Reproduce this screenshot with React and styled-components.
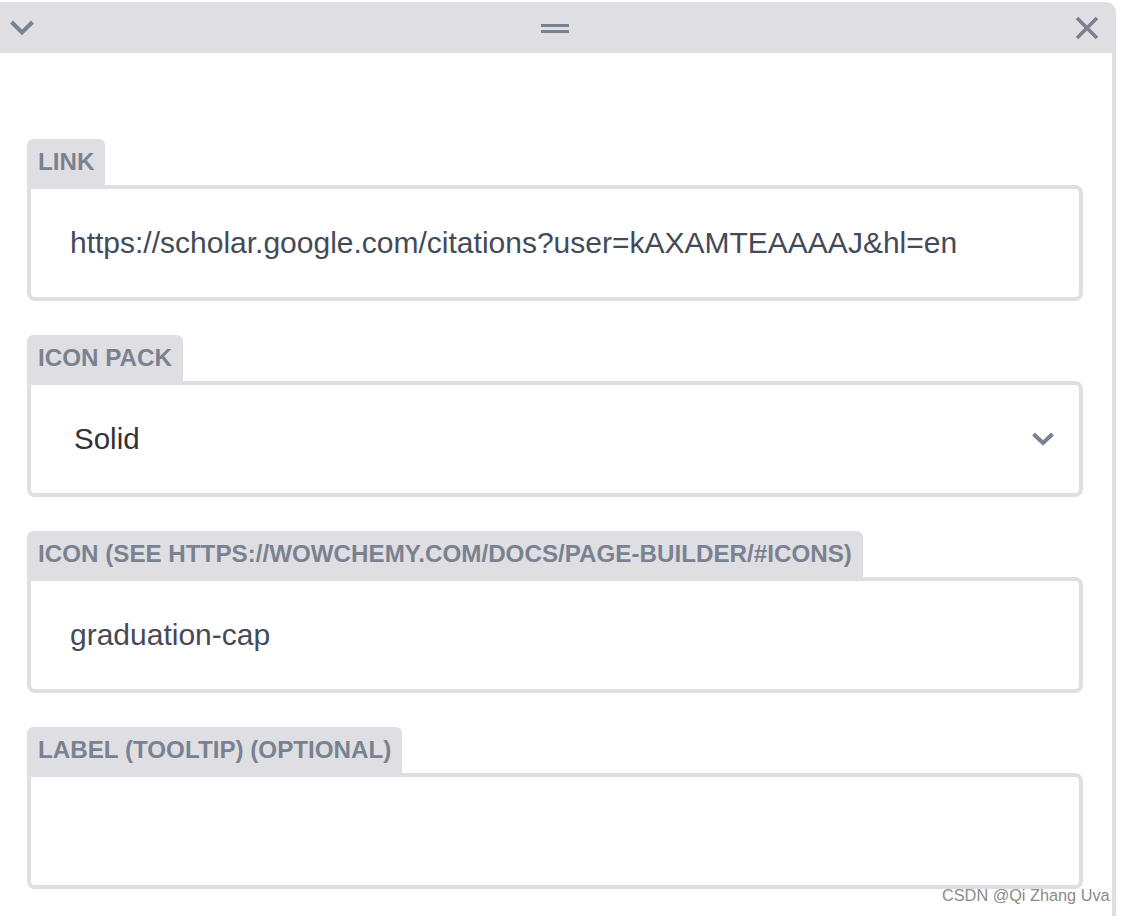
import React from "react";
import styled, { createGlobalStyle } from "styled-components";

const GlobalStyle = createGlobalStyle`
  html, body {
    margin: 0;
    padding: 0;
    background: #fff;
  }
  body {
    font-family: "Liberation Sans", Arial, sans-serif;
  }
`;

const fields = [
  { label: "Link", value: "https://scholar.google.com/citations?user=kAXAMTEAAAAJ&hl=en" },
  { label: "Icon pack", value: "Solid", select: true },
  { label: "Icon (see https://wowchemy.com/docs/page-builder/#icons)", value: "graduation-cap" },
  { label: "Label (tooltip) (optional)", value: "" },
];

function App() {
  return (
    <Page>
      <GlobalStyle />
      <Panel>
        <TopBar>
          <BarButton>
            <svg width="26" height="18" viewBox="0 0 26 18">
              <path d="M2.5 3 L13 13.5 L23.5 3" fill="none" stroke="#7a8291" strokeWidth="4" />
            </svg>
          </BarButton>
          <BarButton>
            <svg width="28" height="10" viewBox="0 0 28 10">
              <rect x="0" y="1" width="28" height="3" fill="#7a8291" />
              <rect x="0" y="7" width="28" height="3" fill="#7a8291" />
            </svg>
          </BarButton>
          <BarButton>
            <svg width="24" height="24" viewBox="0 0 24 24">
              <path d="M2 2 L22 22 M22 2 L2 22" fill="none" stroke="#7a8291" strokeWidth="3.6" />
            </svg>
          </BarButton>
        </TopBar>
        <Body>
          {fields.map((f) => (
            <Field key={f.label}>
              <Tab>{f.label}</Tab>
              <Input select={f.select}>
                <span>{f.value}</span>
                {f.select && (
                  <svg width="24" height="16" viewBox="0 0 24 16">
                    <path d="M2.5 3 L12 12 L21.5 3" fill="none" stroke="#7a8291" strokeWidth="4" />
                  </svg>
                )}
              </Input>
            </Field>
          ))}
        </Body>
      </Panel>
      <Watermark>CSDN @Qi Zhang Uva</Watermark>
    </Page>
  );
}

export default App;

const Page = styled.div`
  position: relative;
  width: 1126px;
  height: 916px;
  overflow: hidden;
`;

const Panel = styled.div`
  width: 1116px;
  margin-top: 2px;
  display: flex;
  flex-direction: column;
  height: 914px;
`;

const TopBar = styled.div`
  height: 51px;
  background: #dfdfe3;
  border-top-right-radius: 10px;
  display: flex;
  align-items: center;
  justify-content: space-between;
  padding: 0 17px 0 9px;
  box-sizing: border-box;
`;

const BarButton = styled.div`
  display: flex;
  align-items: center;
  justify-content: center;

  > svg {
    display: block;
  }
`;

const Body = styled.div`
  flex: 1;
  border-right: 4px solid #dfdfe3;
  padding: 86px 29px 0 27px;
  display: flex;
  flex-direction: column;
  gap: 34px;
`;

const Field = styled.div`
  display: flex;
  flex-direction: column;
  align-items: flex-start;
`;

const Tab = styled.div`
  height: 46px;
  display: flex;
  align-items: center;
  padding: 0 11px;
  background: #dfdfe3;
  border-radius: 6px 6px 0 0;
  color: #7a8291;
  font-size: 24.2px;
  font-weight: 700;
  text-transform: uppercase;
  white-space: nowrap;
`;

const Input = styled.div`
  align-self: stretch;
  box-sizing: border-box;
  height: 116px;
  border: 4px solid #dfdfe3;
  border-radius: 0 8px 8px 8px;
  display: flex;
  align-items: center;
  justify-content: space-between;
  padding: 0 ${(p) => (p.select ? "24px 0 43px" : "0 0 39px")};
  font-size: ${(p) => (p.select ? "29.5px" : "30px")};
  color: ${(p) => (p.select ? "#333" : "#444a57")};
  white-space: nowrap;

  > svg {
    display: block;
  }
`;

const Watermark = styled.div`
  position: absolute;
  left: 942px;
  top: 886px;
  font-size: 16.3px;
  color: #8a8a8a;
  white-space: nowrap;
`;
